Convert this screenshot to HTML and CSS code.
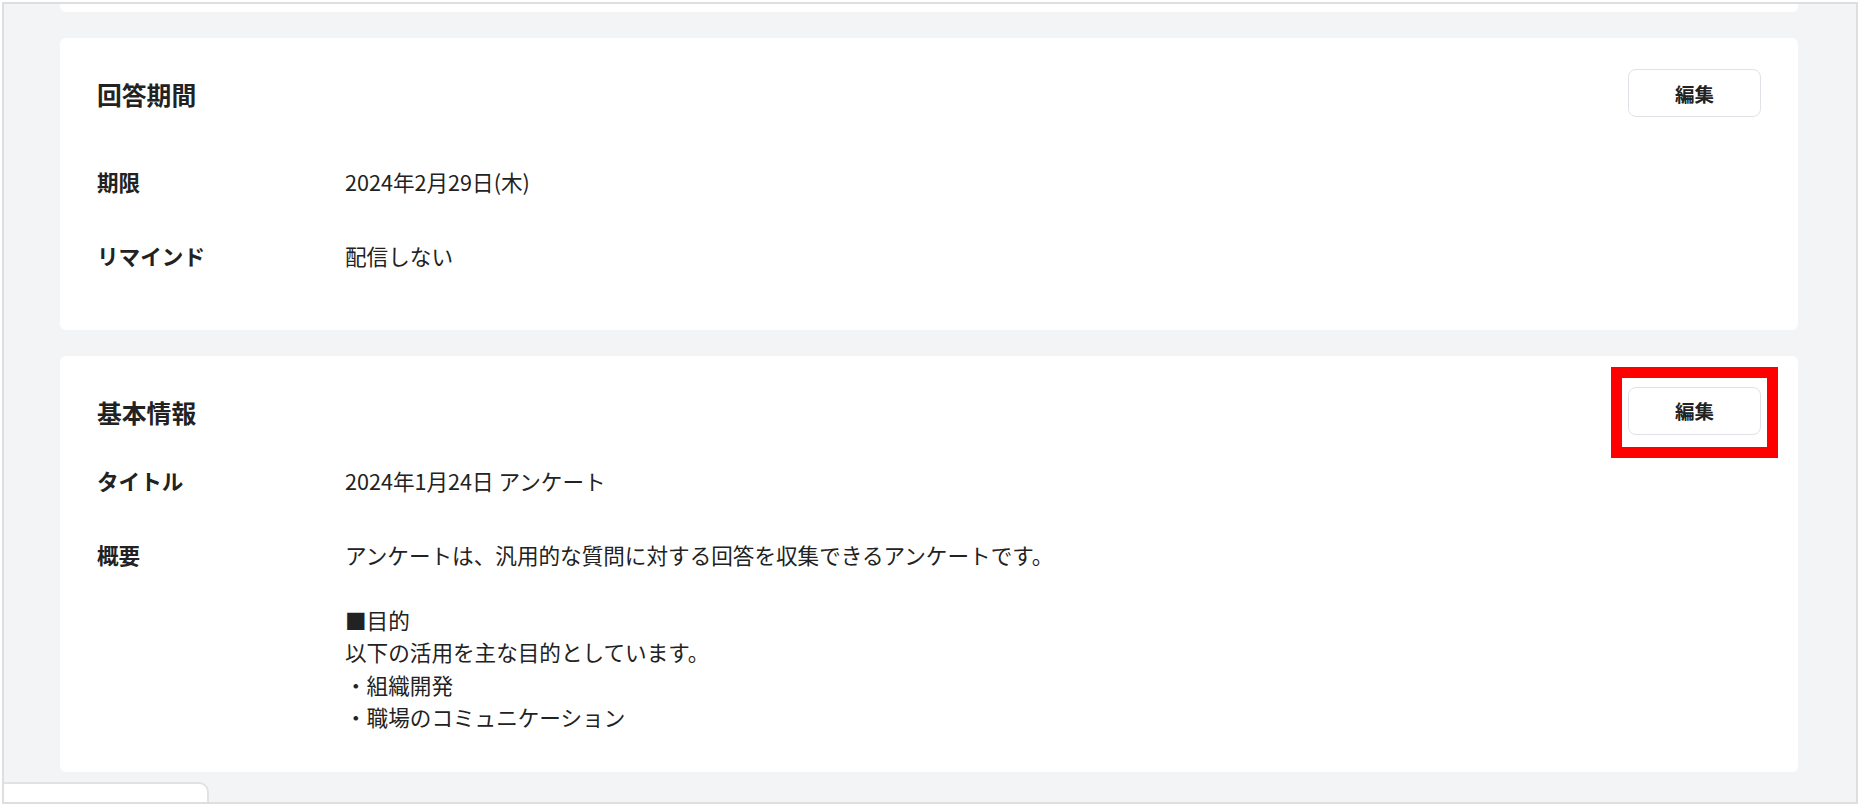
FILE: index.html
```html
<!DOCTYPE html>
<html lang="ja">
<head>
    <meta charset="UTF-8">
    <meta name="viewport" content="width=device-width, initial-scale=1.0">
    <title>アンケート設定</title>
    <link rel="stylesheet" href="styles.css">
</head>
<body>
    <div class="frame">
        <div class="content">
            <!-- 上のカード（スクロールで切れている） -->
            <div class="card card-cut"></div>

            <section class="card">
                <div class="card-head">
                    <h2>回答期間</h2>
                    <button class="edit-btn">編集</button>
                </div>
                <div class="rows rows-loose">
                    <div class="row">
                        <div class="label">期限</div>
                        <div class="value">2024年2月29日(木)</div>
                    </div>
                    <div class="row">
                        <div class="label">リマインド</div>
                        <div class="value">配信しない</div>
                    </div>
                </div>
            </section>

            <section class="card">
                <div class="card-head">
                    <h2>基本情報</h2>
                    <div class="marked">
                        <button class="edit-btn">編集</button>
                        <span class="mark"></span>
                    </div>
                </div>
                <div class="rows">
                    <div class="row">
                        <div class="label">タイトル</div>
                        <div class="value">2024年1月24日 アンケート</div>
                    </div>
                    <div class="row">
                        <div class="label">概要</div>
                        <div class="value multiline">アンケートは、汎用的な質問に対する回答を収集できるアンケートです。

■目的
以下の活用を主な目的としています。
・組織開発
・職場のコミュニケーション</div>
                    </div>
                </div>
            </section>
        </div>

        <!-- 左下のタブ -->
        <div class="bottom-tab"></div>
    </div>
</body>
</html>
```

FILE: styles.css
```css
body {
    margin: 0;
    padding: 2px;
    background: #fff;
    font-family: "Noto Sans CJK JP", "Noto Sans", sans-serif;
    color: #222;
}

.frame {
    position: relative;
    box-sizing: border-box;
    height: 802px;
    border: 2px solid #dedede;
    background: #f3f4f6;
    overflow: hidden;
}

.content {
    display: flex;
    flex-direction: column;
    gap: 26px;
    padding: 0 58px 0 56px;
}

.card {
    background: #fff;
    border-radius: 6px;
    padding: 31px 37px 38px;
}

.card-cut {
    height: 8px;
    padding: 0;
    border-radius: 0 0 6px 6px;
}

.card-head {
    display: flex;
    justify-content: space-between;
    align-items: center;
    height: 48px;
}

h2 {
    margin: 0;
    font-size: 24.8px;
    font-weight: 700;
    line-height: 36px;
    position: relative;
    top: 1px;
}

.edit-btn {
    box-sizing: border-box;
    width: 133px;
    height: 48px;
    border: 1.5px solid #dfe3e8;
    border-radius: 8px;
    background: #fff;
    font-family: inherit;
    font-size: 19.5px;
    font-weight: 700;
    color: #222;
    cursor: pointer;
}

/* 赤い枠（注目箇所） */
.marked {
    position: relative;
    display: flex;
}

.mark {
    position: absolute;
    top: -20px;
    bottom: -23px;
    left: -17px;
    right: -17px;
    border: 11px solid #ff0000;
}

.rows {
    display: flex;
    flex-direction: column;
    gap: 42px;
    margin-top: 30px;
}

.rows-loose {
    padding: 19px 0;
}

.row {
    display: flex;
    font-size: 21.6px;
    line-height: 32.4px;
}

.label {
    width: 248px;
    flex-shrink: 0;
    font-weight: 700;
}

.multiline {
    white-space: pre-line;
}

.bottom-tab {
    position: absolute;
    left: 0;
    bottom: 0;
    width: 203px;
    height: 18px;
    background: #fff;
    border-top: 2px solid #e2e2e2;
    border-right: 2px solid #e2e2e2;
    border-top-right-radius: 10px;
}
```
